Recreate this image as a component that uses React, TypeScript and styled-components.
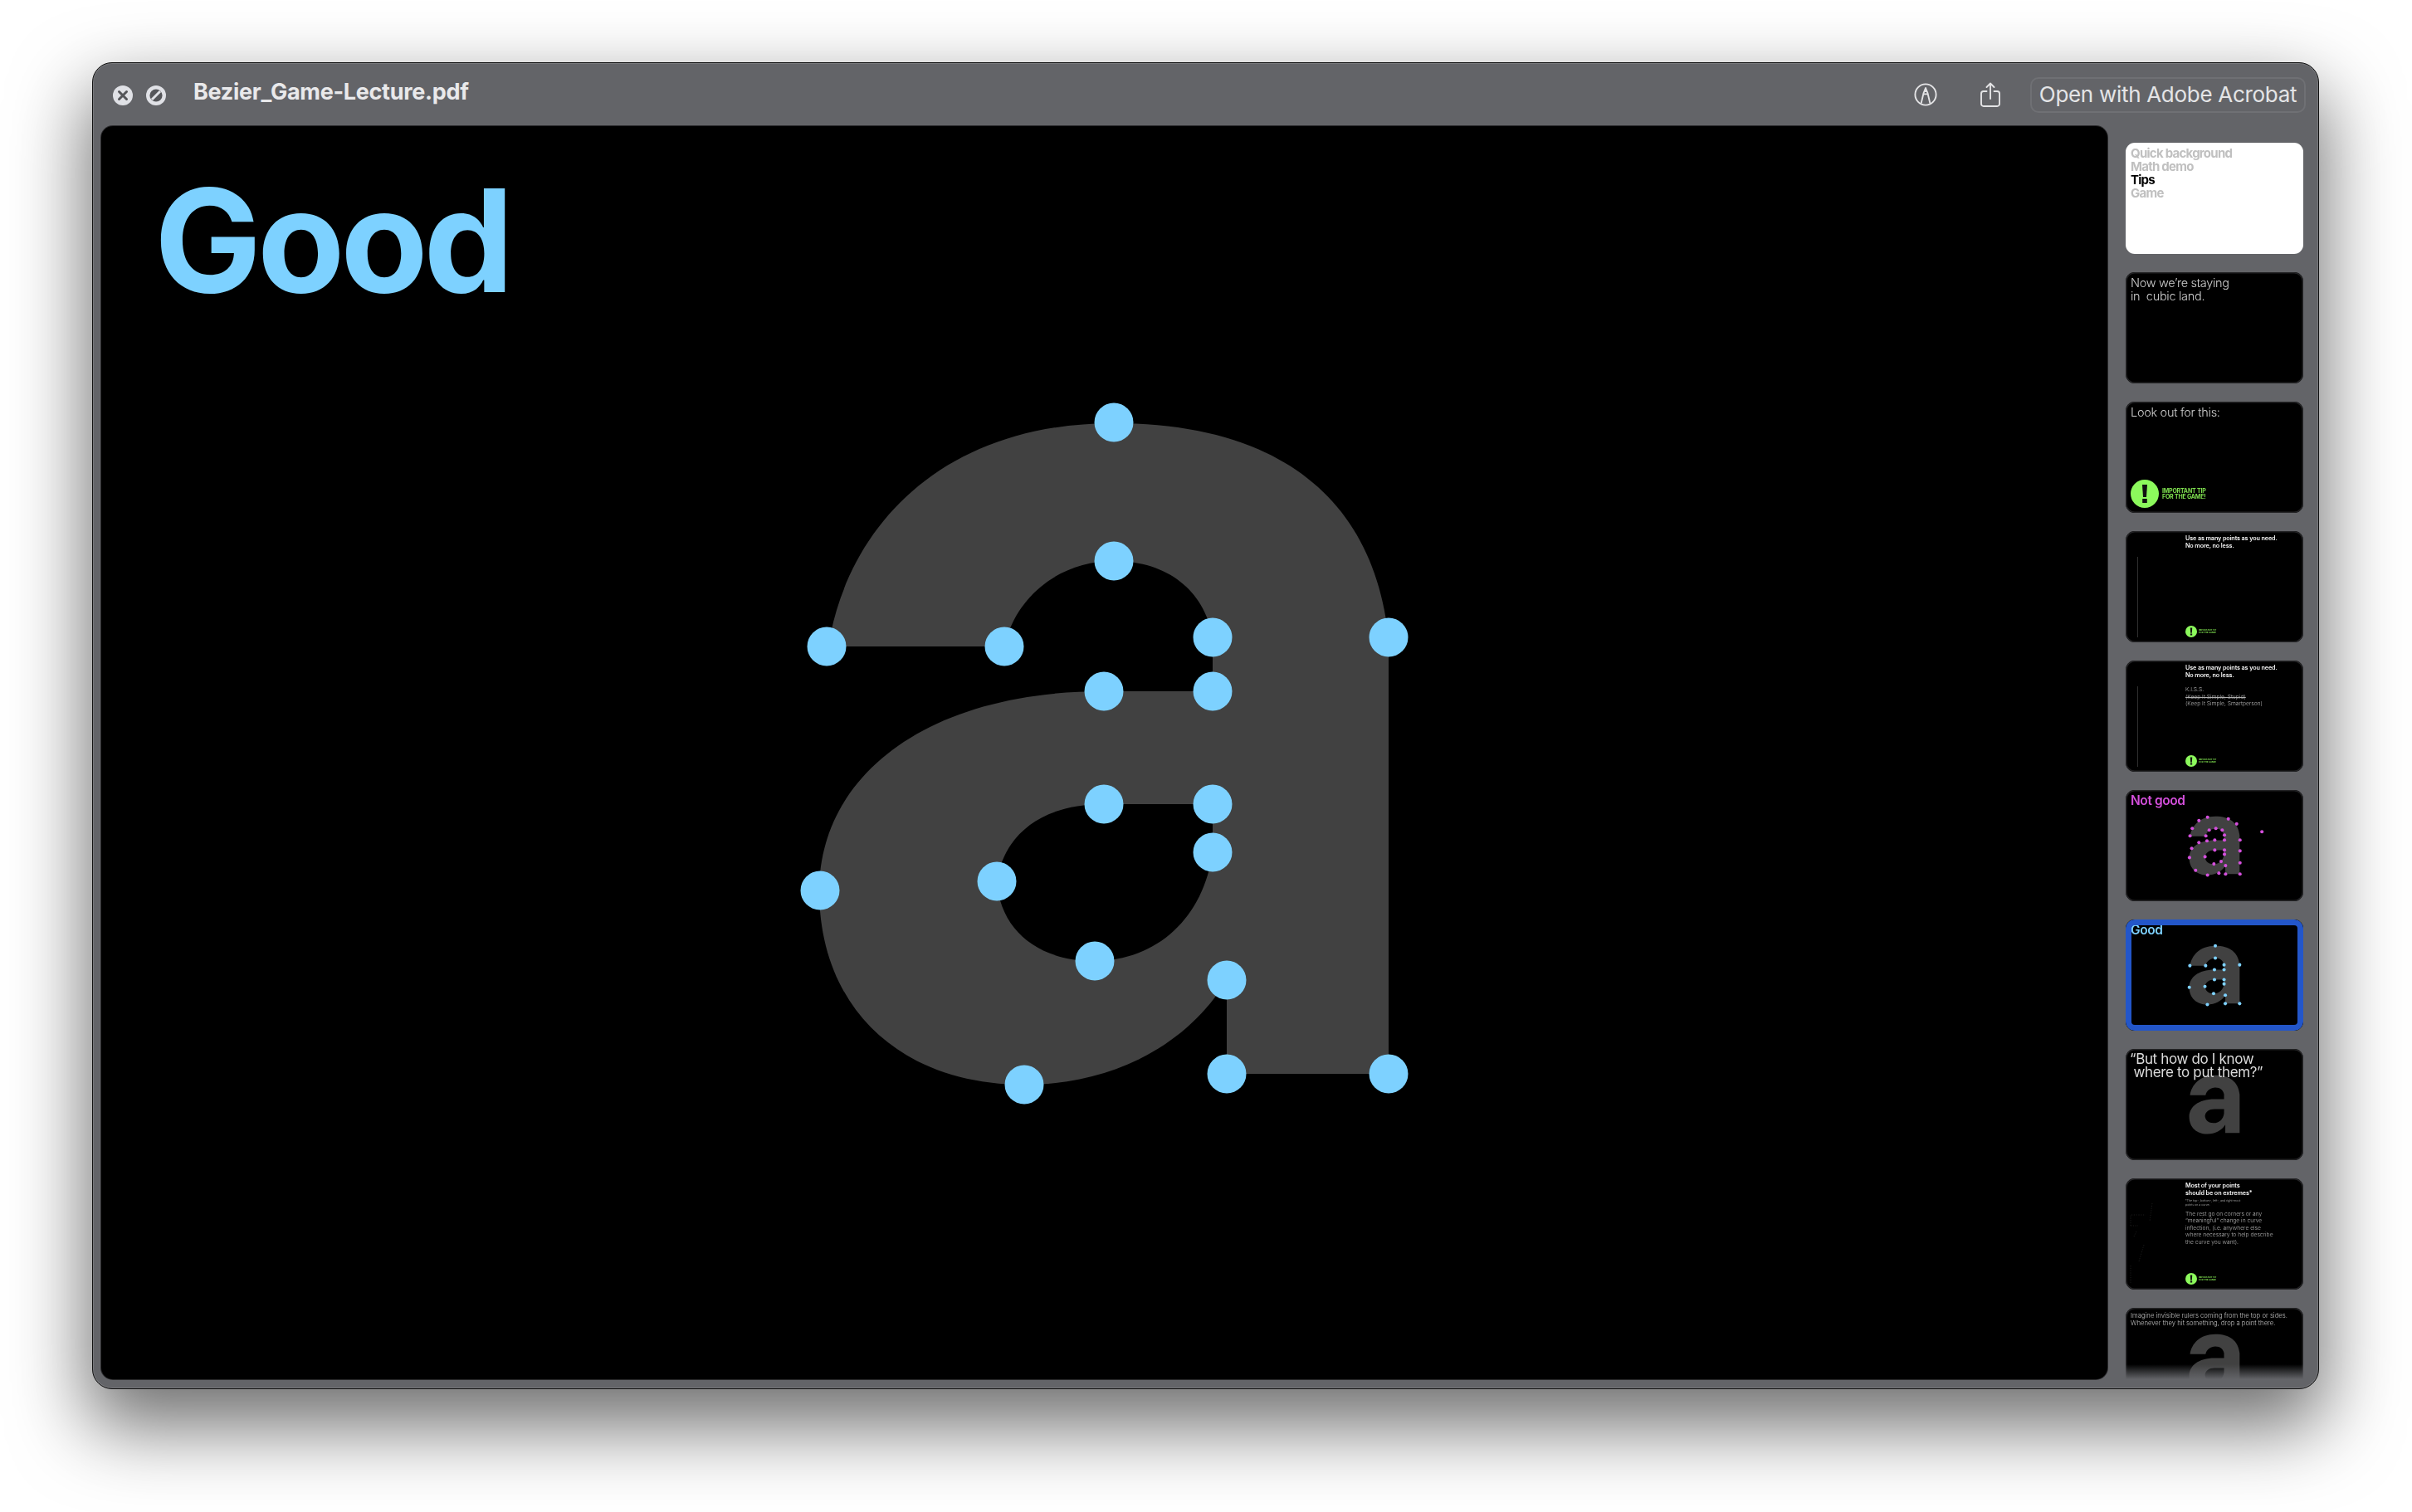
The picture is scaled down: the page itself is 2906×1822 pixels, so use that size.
import React from "react";
import styled, { createGlobalStyle } from "styled-components";

const GlobalStyle = createGlobalStyle`
  html, body { margin: 0; padding: 0; background: #fff; }
  body { font-family: Inter, "Liberation Sans", sans-serif; }
`;

const BLUE = "#7dd1ff";
const PINK = "#d44fdc";
const LIME = "#8cf95c";
const CHROME = "#636468";

const LETTER_A =
  "M998 779C1020 640 1130 510 1342 510C1540 510 1655 600 1673 768L1673 1294L1478 1294L1478 1181C1430 1260 1340 1307 1234 1307C1085 1307 987 1215 987 1073C987 940 1110 833 1330 833L1461 833L1461 768C1452 715 1410 676 1342 676C1280 676 1225 715 1210 779Z" +
  "M1330 969C1255 969 1210 1005 1201 1062C1205 1120 1250 1158 1318 1158C1395 1158 1450 1105 1461 1027L1461 969Z";

const GOOD_POINTS: [number, number][] = [
  [1342, 509], [1342, 676], [996, 779], [1210, 779], [1461, 768], [1673, 768],
  [1330, 833], [1461, 833], [1330, 969], [1461, 969], [1461, 1027], [1201, 1062],
  [988, 1073], [1319, 1158], [1478, 1181], [1234, 1307], [1478, 1294], [1673, 1294],
];

const BAD_RAW: [number, number][] = [
  [358, 105], [327, 117], [433, 111], [463, 129], [303, 145], [295, 172], [364, 151], [388, 145],
  [411, 151], [352, 172], [419, 169], [475, 187], [419, 187], [384, 187], [356, 190], [327, 196],
  [301, 217], [384, 223], [419, 223], [475, 226], [419, 238], [349, 247], [293, 250], [407, 264],
  [381, 273], [475, 269], [423, 279], [315, 296], [358, 313], [399, 306], [423, 309], [475, 309],
  [554, 157],
];
const BAD_POINTS: [number, number][] = BAD_RAW.map(([x, y]) => [
  122 + ((x - 63) / 640) * 2417,
  152 + ((y - 7) / 400) * 1510,
]);

const Page = styled.div`
  box-sizing: border-box;
  width: 2906px;
  height: 1822px;
  padding: 75px 0 0 111px;
  overflow: hidden;
  background: #fff;
`;

const Window = styled.div`
  box-sizing: border-box;
  width: 2683px;
  height: 1599px;
  display: flex;
  flex-direction: column;
  border: 1px solid #111;
  border-radius: 24px;
  background: ${CHROME};
  box-shadow: 0 40px 90px 6px rgba(0, 0, 0, 0.56), inset 0 0 0 1px rgba(255, 255, 255, 0.13);
  overflow: hidden;
`;

const TitleBar = styled.header`
  flex: 0 0 76px;
  display: flex;
  align-items: center;
  padding: 0 15px 0 24px;
`;

const WindowControls = styled.div`
  display: flex;
  gap: 16px;
  margin-right: 33px;
  padding-top: 1px;
`;

const FileName = styled.h1`
  margin: 0 auto 0 0;
  font: 700 27px/32px Inter, "Liberation Sans", sans-serif;
  letter-spacing: -0.3px;
  color: #e9e9eb;
  padding-bottom: 6px;
`;

const ToolIcons = styled.div`
  display: flex;
  align-items: center;
  gap: 52px;
  margin-right: 36px;
`;

const OpenButton = styled.button`
  box-sizing: border-box;
  width: 332px;
  height: 43px;
  padding: 0 0 2px;
  border: 2px solid #6f7074;
  border-radius: 10px;
  background: transparent;
  font: 400 26px/37px Inter, "Liberation Sans", sans-serif;
  letter-spacing: -0.3px;
  color: #e4e4e6;
`;

const Content = styled.div`
  flex: 1;
  min-height: 0;
  display: flex;
  gap: 22px;
  padding: 0 0 11px 10px;
`;

const Viewer = styled.main`
  position: relative;
  flex: 0 0 2417px;
  height: 1510px;
  box-sizing: border-box;
  padding: 45px 0 0 64px;
  background: #000;
  border-radius: 14px;
  box-shadow: 0 0 0 1px #2a2a2c;
  overflow: hidden;
`;

const SlideArt = styled.svg`
  position: absolute;
  inset: 0;
  width: 100%;
  height: 100%;
`;

const BigTitle = styled.h2`
  position: relative;
  margin: 0;
  font: 700 172px/184px Inter, "Liberation Sans", sans-serif;
  letter-spacing: -5.2px;
  color: ${BLUE};
`;

const Sidebar = styled.aside`
  position: relative;
  flex: 0 0 214px;
  height: 1510px;
  box-sizing: border-box;
  padding-top: 20px;
  display: flex;
  flex-direction: column;
  gap: 22px;
  overflow: hidden;
`;

const BottomFade = styled.div`
  position: absolute;
  left: 0;
  right: 0;
  bottom: 0;
  height: 18px;
  background: linear-gradient(to bottom, rgba(99, 100, 104, 0), ${CHROME});
`;

const Thumb = styled.div<{ $light?: boolean }>`
  position: relative;
  flex: 0 0 134px;
  box-sizing: border-box;
  padding: 5px 6px;
  border-radius: 11px;
  background: ${(p) => (p.$light ? "#fff" : "#000")};
  box-shadow: ${(p) => (p.$light ? "none" : "inset 0 0 0 1.5px #232325")};
  overflow: hidden;
`;

const ActiveRing = styled.div`
  position: absolute;
  inset: 0;
  border: 7px solid #2356c9;
  border-radius: 11px;
`;

const OutlineList = styled.div`
  position: relative;
  font: 700 15px/16px Inter, "Liberation Sans", sans-serif;
  letter-spacing: -0.75px;
  filter: blur(0.3px);
`;

const OutlineItem = styled.div<{ $current?: boolean }>`
  color: ${(p) => (p.$current ? "#000" : "#c0c0c0")};
`;

const SlideLine = styled.div`
  position: relative;
  font: 300 14.5px/16px Inter, "Liberation Sans", sans-serif;
  letter-spacing: -0.3px;
  color: #cfcfcf;
  white-space: pre;
  filter: blur(0.3px);
`;

const LargeQuote = styled.div`
  position: relative;
  margin: -1px 0 0 -1px;
  font: 400 17px/16px Inter, "Liberation Sans", sans-serif;
  letter-spacing: -0.35px;
  color: #dcdcdc;
  white-space: pre;
  filter: blur(0.3px);
`;

const Heading = styled.div<{ $color: string }>`
  position: relative;
  font: 600 15.5px/16px Inter, "Liberation Sans", sans-serif;
  letter-spacing: -0.4px;
  color: ${(p) => p.$color};
  filter: blur(0.3px);
`;

const TextColumn = styled.div`
  position: relative;
  margin-left: 66px;
  filter: blur(0.3px);
`;

const SmallHead = styled.div`
  font: 600 7.2px/8.6px Inter, "Liberation Sans", sans-serif;
  letter-spacing: -0.1px;
  color: #f2f2f2;
  white-space: pre;
`;

const SmallBody = styled.div<{ $top: number }>`
  margin-top: ${(p) => p.$top}px;
  font: 300 6.7px/8.5px Inter, "Liberation Sans", sans-serif;
  color: #b0b0b0;
  white-space: pre;
`;

const Struck = styled.span`
  text-decoration: line-through;
`;

const FootNote = styled.div`
  margin-top: 3px;
  font: 400 3.5px/4.8px Inter, "Liberation Sans", sans-serif;
  color: #a0a0a0;
  white-space: pre;
`;

const WideNote = styled.div`
  position: relative;
  margin-top: 1px;
  font: 300 7.7px/8.7px Inter, "Liberation Sans", sans-serif;
  color: #c0c0c0;
  white-space: pre;
  filter: blur(0.3px);
`;

const Guide = styled.div`
  position: absolute;
  left: 14px;
  top: 31px;
  width: 1px;
  height: 97px;
  background: #2f2f2f;
`;

const TipMark = styled.div<{ $small?: boolean }>`
  position: absolute;
  display: flex;
  align-items: center;
  left: ${(p) => (p.$small ? 72 : 6)}px;
  bottom: 6px;
  gap: ${(p) => (p.$small ? 2 : 4)}px;
`;

const TipDisc = styled.svg<{ $small?: boolean }>`
  width: ${(p) => (p.$small ? 14 : 34)}px;
  height: ${(p) => (p.$small ? 14 : 34)}px;
  flex: none;
`;

const TipLabel = styled.div<{ $small?: boolean }>`
  font: 700 ${(p) => (p.$small ? "2.7px/3px" : "7px/7px")} Inter, "Liberation Sans", sans-serif;
  letter-spacing: ${(p) => (p.$small ? 0 : "-0.2px")};
  color: #7fe04f;
  white-space: pre;
  filter: blur(0.2px);
`;

const Tip = ({ small }: { small?: boolean }) => (
  <TipMark $small={small}>
    <TipDisc $small={small} viewBox="0 0 34 34">
      <circle cx="17" cy="17" r="17" fill={LIME} />
      <path d="M14 6h6l-1 15h-4z" fill="#111" />
      <rect x="14.2" y="23" width="5.6" height="5" fill="#111" />
    </TipDisc>
    <TipLabel $small={small}>{"IMPORTANT TIP\nFOR THE GAME!"}</TipLabel>
  </TipMark>
);

const Art = ({
  points,
  color,
  r,
}: {
  points?: [number, number][];
  color?: string;
  r?: number;
}) => (
  <SlideArt viewBox="0 0 2417 1510" preserveAspectRatio="none">
    <g transform="translate(-122 -152)">
      <path d={LETTER_A} fill="#414141" fillRule="evenodd" />
      {points?.map(([x, y], i) => (
        <circle key={i} cx={x} cy={y} r={r} fill={color} />
      ))}
    </g>
  </SlideArt>
);

const CloseIcon = () => (
  <svg width="24" height="24" viewBox="0 0 24 24">
    <circle cx="12" cy="12" r="12" fill="#e0e1e6" />
    <path d="M7.5 7.5l9 9M16.5 7.5l-9 9" stroke="#55565a" strokeWidth="3" strokeLinecap="round" />
  </svg>
);

const BlockedIcon = () => (
  <svg width="24" height="24" viewBox="0 0 24 24">
    <circle cx="12" cy="12" r="12" fill="#e0e1e6" />
    <circle cx="12" cy="12" r="7.6" fill="#55565a" />
    <path d="M7 17L17 7" stroke="#e0e1e6" strokeWidth="3" />
  </svg>
);

const MarkupIcon = () => (
  <svg width="28" height="28" viewBox="0 0 28 28" fill="none" stroke="#e4e4e6" strokeWidth="1.9" strokeLinejoin="round">
    <circle cx="14" cy="14" r="12.6" />
    <path d="M8.6 24.6L11.6 12L14 6L16.4 12L19.4 24.6" />
    <path d="M11.6 13.4h4.8" />
    <path d="M14 6v5" />
  </svg>
);

const ShareIcon = () => (
  <svg width="24" height="30" viewBox="0 0 24 30" fill="none" stroke="#e4e4e6" strokeWidth="1.9" strokeLinecap="round" strokeLinejoin="round">
    <path d="M7.5 11H3.8A2.8 2.8 0 0 0 1 13.8v12.4A2.8 2.8 0 0 0 3.8 29h16.4a2.8 2.8 0 0 0 2.8-2.8V13.8a2.8 2.8 0 0 0-2.8-2.8h-3.7" />
    <path d="M12 20V1.5M7.5 6L12 1.5L16.5 6" />
  </svg>
);

const FaintOutline = () => (
  <SlideArt viewBox="0 0 214 134">
    <path
      d="M6 57h9M6 57V44h18M6 105v22M32 30l-3 22M22 80l-6 20M10 70l3 -6"
      stroke="#262626"
      strokeWidth="0.7"
      strokeDasharray="1.2 1.6"
      fill="none"
    />
  </SlideArt>
);

export default function App() {
  return (
    <>
      <GlobalStyle />
      <Page>
        <Window>
          <TitleBar>
            <WindowControls>
              <CloseIcon />
              <BlockedIcon />
            </WindowControls>
            <FileName>Bezier_Game-Lecture.pdf</FileName>
            <ToolIcons>
              <MarkupIcon />
              <ShareIcon />
            </ToolIcons>
            <OpenButton>Open with Adobe Acrobat</OpenButton>
          </TitleBar>
          <Content>
            <Viewer>
              <Art points={GOOD_POINTS} color={BLUE} r={23.5} />
              <BigTitle>Good</BigTitle>
            </Viewer>
            <Sidebar>
              <Thumb $light>
                <OutlineList>
                  <OutlineItem>Quick background</OutlineItem>
                  <OutlineItem>Math demo</OutlineItem>
                  <OutlineItem $current>Tips</OutlineItem>
                  <OutlineItem>Game</OutlineItem>
                </OutlineList>
              </Thumb>
              <Thumb>
                <SlideLine>{"Now we’re staying\nin  cubic land."}</SlideLine>
              </Thumb>
              <Thumb>
                <SlideLine>Look out for this:</SlideLine>
                <Tip />
              </Thumb>
              <Thumb>
                <Guide />
                <TextColumn>
                  <SmallHead>{"Use as many points as you need.\nNo more, no less."}</SmallHead>
                </TextColumn>
                <Tip small />
              </Thumb>
              <Thumb>
                <Guide />
                <TextColumn>
                  <SmallHead>{"Use as many points as you need.\nNo more, no less."}</SmallHead>
                  <SmallBody $top={9}>
                    K.I.S.S.{"\n"}
                    <Struck>(Keep It Simple, Stupid)</Struck>
                    {"\n"}(Keep It Simple, Smartperson)
                  </SmallBody>
                </TextColumn>
                <Tip small />
              </Thumb>
              <Thumb>
                <Art points={BAD_POINTS} color={PINK} r={23} />
                <Heading $color={PINK}>Not good</Heading>
              </Thumb>
              <Thumb>
                <Art points={GOOD_POINTS} color={BLUE} r={23} />
                <Heading $color={BLUE}>Good</Heading>
                <ActiveRing />
              </Thumb>
              <Thumb>
                <Art />
                <LargeQuote>{"“But how do I know\n where to put them?”"}</LargeQuote>
              </Thumb>
              <Thumb>
                <FaintOutline />
                <TextColumn>
                  <SmallHead>{"Most of your points\nshould be on extremes*"}</SmallHead>
                  <FootNote>{"*The top-, bottom-, left-, and right-most\npoints on a curve."}</FootNote>
                  <SmallBody $top={4}>
                    {"The rest go on corners or any\n“meaningful” change in curve\ninflection, (i.e. anywhere else\nwhere necessary to help describe\nthe curve you want)."}
                  </SmallBody>
                </TextColumn>
                <Tip small />
              </Thumb>
              <Thumb>
                <Art />
                <WideNote>
                  {"Imagine invisible rulers coming from the top or sides.\nWhenever they hit something, drop a point there."}
                </WideNote>
              </Thumb>
              <BottomFade />
            </Sidebar>
          </Content>
        </Window>
      </Page>
    </>
  );
}
